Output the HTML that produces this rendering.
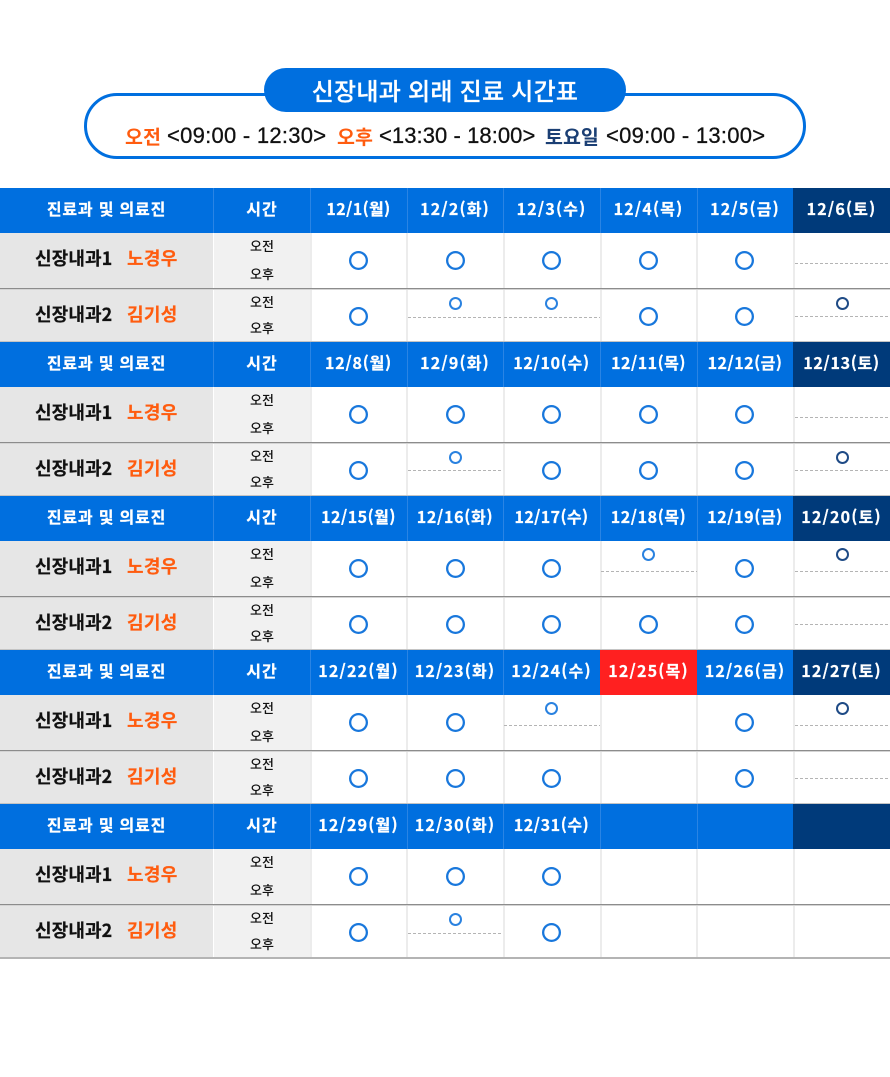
<!DOCTYPE html>
<html lang="ko"><head><meta charset="utf-8">
<style>
html,body{margin:0;padding:0;background:#fff}
#p{position:relative;width:890px;height:1077px;overflow:hidden;background:#fff;font-family:"Noto Sans CJK KR","Liberation Sans",sans-serif}
#p div,#p i,#p u,#p span{position:absolute;display:block}
.box{left:84px;top:93px;width:716px;height:60px;border:3px solid #006fdf;border-radius:33px}
.pill{left:264px;top:68px;width:362px;height:44px;border-radius:22px;background:#006fdf;color:#fff;font-size:24px;font-weight:500;line-height:43px;text-align:center;white-space:nowrap;letter-spacing:.25px;-webkit-text-stroke:.25px #fff}
.l{top:123px;height:26px;line-height:26px;white-space:nowrap;font-weight:500}
.k{font-size:19.5px;font-weight:700}
.t{font-family:"Liberation Sans",sans-serif;font-size:22px;color:#111;-webkit-text-stroke:.3px #111}
.or{color:#ff5c0f}.nv{color:#1b3f74}
.b{left:0;width:890px;height:154px}
.n{left:0;top:45px;width:213px;height:108px;background:#e6e6e6}
.tm{left:214px;top:45px;width:96px;height:108px;background:#f1f1f1}
.h{left:0;top:0;width:793px;height:45px;background:#006fdf}
.hs{left:793px;top:0;width:97px;height:45px;background:#003a7a}
.v{top:0;width:1px;height:45px;background:#2a84e4}
.w{top:45px;width:2px;height:108px;background:#ececec}
.line{left:0;top:100px;width:890px;height:1px;background:#8c8c8c;box-shadow:0 1px 0 #d4d4d4}
.end{left:0;top:153px;width:890px;height:1px;background:#c4c4c4}
.x{top:0;height:40px;line-height:40px;color:#fff;font-size:16px;font-weight:700;text-align:center;white-space:nowrap;letter-spacing:1.2px;-webkit-text-stroke:.25px #fff}
.c1.x{left:310px;width:97px}.c2.x{left:407px;width:96px}.c3.x{left:503px;width:97px}.c4.x{left:600px;width:97px}.c5.x{left:697px;width:96px}.c6.x{left:793px;width:97px}
.hn{left:0;width:213px;font-size:16px;letter-spacing:.8px}
.ht{left:214px;width:96px;font-size:16px;letter-spacing:1px}
.lab{left:0;width:213px;height:24px;line-height:24px;font-size:18px;font-weight:700;color:#111;white-space:nowrap;-webkit-text-stroke:.2px currentColor}
.lab span{top:0}
.a{left:35px;letter-spacing:.1px}.bb{left:127px;color:#ff5c0f;letter-spacing:.3px}
.q{left:214px;width:96px;height:20px;line-height:20px;text-align:center;font-size:13px;font-weight:500;color:#111}
.q1{top:48px}.q2{top:76px}.q3{top:104px}.q4{top:130px}
i{box-sizing:border-box;border-radius:50%}
.O{width:19px;height:19px;box-shadow:inset 0 0 0 2.3px #1877dc}
.s{width:13px;height:13px;box-shadow:inset 0 0 0 2px #2a82e0}
.s.dk{box-shadow:inset 0 0 0 2px #1f4b86}
.O.r1{top:62.5px}.O.r2{top:118.5px}
.s.r1{top:52px}.s.r2{top:108.5px}
.O.c1{left:349px}.O.c2{left:446px}.O.c3{left:542px}.O.c4{left:639px}.O.c5{left:735px}
.s.c2{left:449px}.s.c3{left:545px}.s.c4{left:642px}.s.c6{left:836px}
u{height:1px;background:repeating-linear-gradient(90deg,#b4b4b4 0 3px,transparent 3px 5px)}
u.r1{top:75px}u.r2{top:129px}u.c6.r2{top:128px}
u.c2{left:408px;width:95px}u.c3{left:504px;width:96px}u.c4{left:601px;width:96px}u.c6{left:795px;width:95px}
</style></head><body><div id="p">
<div class="box"></div>
<div class="pill">신장내과 외래 진료 시간표</div>
<span class="l k or" style="left:125px">오전</span><span class="l t" style="left:167px;letter-spacing:.27px">&lt;09:00 - 12:30&gt;</span>
<span class="l k or" style="left:337px">오후</span><span class="l t" style="left:379px;letter-spacing:.07px">&lt;13:30 - 18:00&gt;</span>
<span class="l k nv" style="left:545px">토요일</span><span class="l t" style="left:606px;letter-spacing:.27px">&lt;09:00 - 13:00&gt;</span>

<div class="b" style="top:188px">
<div class="n"></div><div class="tm"></div><div class="h"></div><div class="hs"></div>
<div class="v" style="left:213px"></div><div class="v" style="left:310px"></div><div class="v" style="left:407px"></div><div class="v" style="left:503px"></div><div class="v" style="left:600px"></div><div class="v" style="left:697px"></div>
<div class="w" style="left:310px"></div><div class="w" style="left:406px"></div><div class="w" style="left:503px"></div><div class="w" style="left:600px"></div><div class="w" style="left:696px"></div><div class="w" style="left:793px"></div>
<div class="x hn">진료과 및 의료진</div><div class="x ht">시간</div>
<div class="x c1" style="letter-spacing:.4px">12/1(월)</div><div class="x c2">12/2(화)</div><div class="x c3">12/3(수)</div><div class="x c4">12/4(목)</div><div class="x c5">12/5(금)</div><div class="x c6">12/6(토)</div>
<div class="lab" style="top:58px"><span class="a">신장내과1</span><span class="bb">노경우</span></div>
<div class="lab" style="top:114px"><span class="a">신장내과2</span><span class="bb">김기성</span></div>
<div class="q q1">오전</div><div class="q q2">오후</div><div class="q q3">오전</div><div class="q q4">오후</div>
<div class="line"></div><div class="end"></div>
<i class="O c1 r1"></i><i class="O c2 r1"></i><i class="O c3 r1"></i><i class="O c4 r1"></i><i class="O c5 r1"></i><u class="c6 r1"></u>
<i class="O c1 r2"></i><i class="s c2 r2"></i><u class="c2 r2"></u><i class="s c3 r2"></i><u class="c3 r2"></u><i class="O c4 r2"></i><i class="O c5 r2"></i><i class="s dk c6 r2"></i><u class="c6 r2"></u>
</div>

<div class="b" style="top:342px">
<div class="n"></div><div class="tm"></div><div class="h"></div><div class="hs"></div>
<div class="v" style="left:213px"></div><div class="v" style="left:310px"></div><div class="v" style="left:407px"></div><div class="v" style="left:503px"></div><div class="v" style="left:600px"></div><div class="v" style="left:697px"></div>
<div class="w" style="left:310px"></div><div class="w" style="left:406px"></div><div class="w" style="left:503px"></div><div class="w" style="left:600px"></div><div class="w" style="left:696px"></div><div class="w" style="left:793px"></div>
<div class="x hn">진료과 및 의료진</div><div class="x ht">시간</div>
<div class="x c1" style="letter-spacing:.8px">12/8(월)</div><div class="x c2">12/9(화)</div><div class="x c3" style="letter-spacing:.7px">12/10(수)</div><div class="x c4" style="letter-spacing:.5px">12/11(목)</div><div class="x c5" style="letter-spacing:.5px">12/12(금)</div><div class="x c6" style="letter-spacing:.7px">12/13(토)</div>
<div class="lab" style="top:58px"><span class="a">신장내과1</span><span class="bb">노경우</span></div>
<div class="lab" style="top:114px"><span class="a">신장내과2</span><span class="bb">김기성</span></div>
<div class="q q1">오전</div><div class="q q2">오후</div><div class="q q3">오전</div><div class="q q4">오후</div>
<div class="line"></div><div class="end"></div>
<i class="O c1 r1"></i><i class="O c2 r1"></i><i class="O c3 r1"></i><i class="O c4 r1"></i><i class="O c5 r1"></i><u class="c6 r1"></u>
<i class="O c1 r2"></i><i class="s c2 r2"></i><u class="c2 r2" style="top:128px"></u><i class="O c3 r2"></i><i class="O c4 r2"></i><i class="O c5 r2"></i><i class="s dk c6 r2"></i><u class="c6 r2"></u>
</div>

<div class="b" style="top:496px">
<div class="n"></div><div class="tm"></div><div class="h"></div><div class="hs"></div>
<div class="v" style="left:213px"></div><div class="v" style="left:310px"></div><div class="v" style="left:407px"></div><div class="v" style="left:503px"></div><div class="v" style="left:600px"></div><div class="v" style="left:697px"></div>
<div class="w" style="left:310px"></div><div class="w" style="left:406px"></div><div class="w" style="left:503px"></div><div class="w" style="left:600px"></div><div class="w" style="left:696px"></div><div class="w" style="left:793px"></div>
<div class="x hn">진료과 및 의료진</div><div class="x ht">시간</div>
<div class="x c1" style="letter-spacing:.5px">12/15(월)</div><div class="x c2" style="letter-spacing:.7px">12/16(화)</div><div class="x c3" style="letter-spacing:.4px">12/17(수)</div><div class="x c4" style="letter-spacing:.6px">12/18(목)</div><div class="x c5" style="letter-spacing:.6px">12/19(금)</div><div class="x c6">12/20(토)</div>
<div class="lab" style="top:58px"><span class="a">신장내과1</span><span class="bb">노경우</span></div>
<div class="lab" style="top:114px"><span class="a">신장내과2</span><span class="bb">김기성</span></div>
<div class="q q1">오전</div><div class="q q2">오후</div><div class="q q3">오전</div><div class="q q4">오후</div>
<div class="line"></div><div class="end"></div>
<i class="O c1 r1"></i><i class="O c2 r1"></i><i class="O c3 r1"></i><i class="s c4 r1"></i><u class="c4 r1"></u><i class="O c5 r1"></i><i class="s dk c6 r1"></i><u class="c6 r1"></u>
<i class="O c1 r2"></i><i class="O c2 r2"></i><i class="O c3 r2"></i><i class="O c4 r2"></i><i class="O c5 r2"></i><u class="c6 r2"></u>
</div>

<div class="b" style="top:650px">
<div class="n"></div><div class="tm"></div><div class="h"></div><div class="hs"></div>
<div style="left:600px;top:0;width:97px;height:45px;background:#ff2020"></div>
<div class="v" style="left:213px"></div><div class="v" style="left:310px"></div><div class="v" style="left:407px"></div><div class="v" style="left:503px"></div>
<div class="w" style="left:310px"></div><div class="w" style="left:406px"></div><div class="w" style="left:503px"></div><div class="w" style="left:600px"></div><div class="w" style="left:696px"></div><div class="w" style="left:793px"></div>
<div class="x hn">진료과 및 의료진</div><div class="x ht">시간</div>
<div class="x c1">12/22(월)</div><div class="x c2">12/23(화)</div><div class="x c3">12/24(수)</div><div class="x c4">12/25(목)</div><div class="x c5">12/26(금)</div><div class="x c6">12/27(토)</div>
<div class="lab" style="top:58px"><span class="a">신장내과1</span><span class="bb">노경우</span></div>
<div class="lab" style="top:114px"><span class="a">신장내과2</span><span class="bb">김기성</span></div>
<div class="q q1">오전</div><div class="q q2">오후</div><div class="q q3">오전</div><div class="q q4">오후</div>
<div class="line"></div><div class="end"></div>
<i class="O c1 r1"></i><i class="O c2 r1"></i><i class="s c3 r1"></i><u class="c3 r1"></u><i class="O c5 r1"></i><i class="s dk c6 r1"></i><u class="c6 r1"></u>
<i class="O c1 r2"></i><i class="O c2 r2"></i><i class="O c3 r2"></i><i class="O c5 r2"></i><u class="c6 r2"></u>
</div>

<div class="b" style="top:804px">
<div class="n"></div><div class="tm"></div><div class="h"></div><div class="hs"></div>
<div class="v" style="left:213px"></div><div class="v" style="left:310px"></div><div class="v" style="left:407px"></div><div class="v" style="left:503px"></div><div class="v" style="left:600px"></div><div class="v" style="left:697px"></div>
<div class="w" style="left:310px"></div><div class="w" style="left:406px"></div><div class="w" style="left:503px"></div><div class="w" style="left:600px"></div><div class="w" style="left:696px"></div><div class="w" style="left:793px"></div>
<div class="x hn">진료과 및 의료진</div><div class="x ht">시간</div>
<div class="x c1">12/29(월)</div><div class="x c2">12/30(화)</div><div class="x c3" style="letter-spacing:.6px">12/31(수)</div>
<div class="lab" style="top:58px"><span class="a">신장내과1</span><span class="bb">노경우</span></div>
<div class="lab" style="top:114px"><span class="a">신장내과2</span><span class="bb">김기성</span></div>
<div class="q q1">오전</div><div class="q q2">오후</div><div class="q q3">오전</div><div class="q q4">오후</div>
<div class="line"></div><div class="end" style="height:2px;background:#b4b4b4"></div>
<i class="O c1 r1"></i><i class="O c2 r1"></i><i class="O c3 r1"></i>
<i class="O c1 r2"></i><i class="s c2 r2"></i><u class="c2 r2"></u><i class="O c3 r2"></i>
</div>
</div></body></html>
